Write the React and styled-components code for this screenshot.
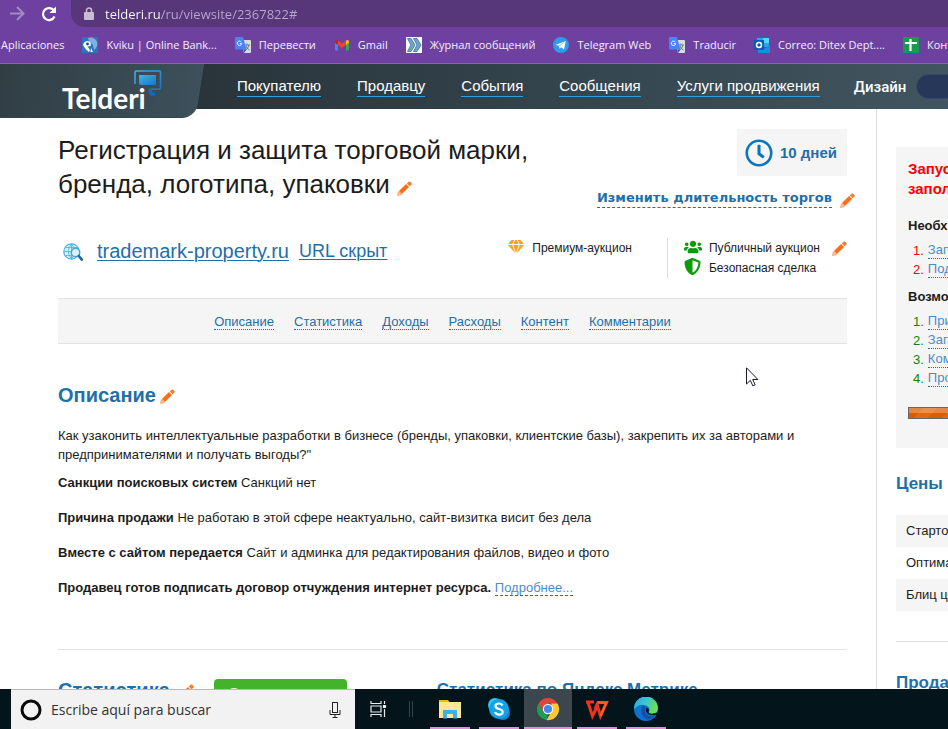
import React from "react";
import styled, { createGlobalStyle, css } from "styled-components";
import { FaUsers, FaShieldAlt, FaRegClock } from "react-icons/fa";

const arial = '"Liberation Sans", Arial, sans-serif';
const ui = '"Open Sans", "Segoe UI", sans-serif';
const blue = "#1f6fa8";

const GlobalStyle = createGlobalStyle`
  *, *::before, *::after { box-sizing: border-box; }
  body { margin: 0; font: 13px/19px ${arial}; color: #1c1c1c; background: #fff; overflow: hidden; }
  h1, h2, h3, p, ul, ol { margin: 0; padding: 0; }
  ul, ol { list-style: none; }
  button, input { font: inherit; margin: 0; padding: 0; border: 0; background: none; color: inherit; outline: 0; }
  a { color: inherit; text-decoration: none; }
  svg { display: block; flex: none; }
`;

const Screen = styled.div`
  display: flex;
  flex-direction: column;
  height: 100vh;
  overflow: hidden;
`;

/* Browser chrome */
const Chrome = styled.header`
  flex: none;
  background: #6e41a1;
  border-bottom: 1px solid #8a63b6;
  color: #f4eefa;
  font-family: ${ui};
  font-size: 11px;
  overflow: hidden;
`;
const AddressRow = styled.div`
  display: flex;
  align-items: center;
  height: 27px;
  padding-left: 1px;
`;
const IconButton = styled.button`
  display: flex;
  width: 32px;
  justify-content: center;
  align-items: center;
  color: ${(p) => (p.$dim ? "#a48ac5" : "#fff")};
`;
const Omnibox = styled.label`
  display: flex;
  flex: 1;
  align-items: center;
  align-self: stretch;
  gap: 11px;
  margin-left: 6px;
  padding-left: 13px;
  background: #573779;
  border-bottom-left-radius: 14px;
`;
const UrlInput = styled.input`
  flex: 1;
  min-width: 0;
  height: 27px;
  font-size: 13px;
  color: transparent;
  background: linear-gradient(90deg, #fff 56px, #bba8d0 56px);
  background-clip: text;
  -webkit-background-clip: text;
`;
const Bookmarks = styled.nav`
  display: flex;
  align-items: center;
  gap: 18px;
  height: 36px;
  padding: 0 0 1px 1px;
`;
const Bookmark = styled.a`
  display: flex;
  flex: none;
  align-items: center;
  gap: 8px;
  white-space: nowrap;
  line-height: 18px;
`;

/* Site header */
const Viewport = styled.div`
  position: relative;
  display: flex;
  flex: 1;
  flex-direction: column;
  min-height: 0;
  overflow: hidden;
`;
const SiteHeader = styled.header`
  position: relative;
  display: flex;
  flex: none;
  height: 45px;
  background: linear-gradient(90deg, #29343a 20%, #354750 65%, #415560);
`;
const LogoTab = styled.a`
  position: relative;
  z-index: 1;
  display: flex;
  flex: none;
  width: 204px;
  height: 54px;
  padding: 5px 0 0 62px;
  color: #fff;
  &::before {
    content: "";
    position: absolute;
    inset: 0 4px 0 -20px;
    z-index: -1;
    background: linear-gradient(90deg, #303d43, #3d505b);
    border-bottom: 1px solid #33434b;
    border-bottom-right-radius: 14px;
    transform: skewX(-9deg);
  }
  svg { position: absolute; left: 134px; top: 6px; }
`;
const LogoText = styled.span`
  padding-top: 11px;
  font: 700 28px/36px Lato, sans-serif;
`;
const SiteNav = styled.nav`
  display: flex;
  flex: none;
  align-items: center;
  gap: 36px;
  padding-left: 33px;
  font-size: 15px;
  line-height: 20px;
  white-space: nowrap;
  color: #fff;
`;
const NavLink = styled.a`
  border-bottom: 1px solid #2f9fd8;
`;
const DesignSwitch = styled.label`
  display: flex;
  align-items: center;
  gap: 10px;
  margin-left: -2px;
  font-family: Roboto, ${arial};
  font-weight: 500;
`;
const Toggle = styled.input`
  appearance: none;
  width: 48px;
  height: 25px;
  background: #26375a;
  border: 1px solid #35476a;
  border-radius: 13px;
`;

/* Page columns */
const Columns = styled.div`
  display: flex;
  flex: 1;
  min-height: 0;
`;
const Main = styled.main`
  flex: 1;
  min-width: 0;
  padding: 20px 29px 0 58px;
`;
const Sidebar = styled.aside`
  flex: 0 0 72px;
  padding: 38px 0 0 19px;
  border-left: 1px solid #ddd;
  white-space: nowrap;
  overflow: hidden;
`;
const TitleRow = styled.div`
  display: flex;
  justify-content: space-between;
  height: 100px;
`;
const Title = styled.h1`
  flex: 0 1 500px;
  padding-top: 4px;
  font-size: 26px;
  font-weight: 400;
  line-height: 34px;
`;
const InlineEdit = styled.button`
  display: inline-block;
  vertical-align: ${(p) => p.$align || "baseline"};
`;
const Duration = styled.div`
  display: flex;
  flex-direction: column;
  align-items: flex-end;
  gap: 12px;
`;
const DaysBadge = styled.div`
  display: flex;
  align-items: center;
  gap: 7px;
  width: 110px;
  height: 47px;
  padding-left: 8px;
  background: #f5f5f5;
  color: ${blue};
  font-size: 15px;
  font-weight: 700;
  svg { color: #0a76bb; }
`;
const DurationEdit = styled.div`
  display: flex;
  gap: 8px;
  margin-right: -8px;
  align-items: flex-end;
`;
const DurationLink = styled.a`
  font: 700 13px/19px "DejaVu Sans", Verdana, sans-serif;
  color: ${blue};
  border-bottom: 1px dashed ${blue};
`;
const MetaRow = styled.div`
  display: flex;
  height: 69px;
  padding-top: 9px;
  align-items: flex-start;
`;
const SiteIcon = styled.span`
  padding: 5px 2px 0 5px;
`;
const SiteLink = styled.a`
  margin-left: ${(p) => (p.$small ? 10 : 12)}px;
  color: ${blue};
  font-size: ${(p) => (p.$small ? 18 : 20)}px;
  line-height: 26px;
  text-decoration: underline;
  text-decoration-thickness: 1px;
  text-underline-offset: 2px;
`;
const Badges = styled.div`
  display: flex;
  flex: none;
  margin-left: auto;
`;
const BadgeList = styled.ul`
  display: flex;
  flex-direction: column;
  height: 40px;
  padding: ${(p) => (p.$divided ? "0 35px 0 0" : "0 0 0 16px")};
  border-right: ${(p) => (p.$divided ? "1px solid #ddd" : 0)};
`;
const Badge = styled.li`
  display: flex;
  align-items: center;
  gap: 7px;
  height: 20px;
  font-size: 12px;
  button { margin-left: 5px; }
`;
const BadgeIcon = styled.span`
  display: flex;
  justify-content: center;
  width: 18px;
  padding-bottom: 3px;
  color: #0a9a0a;
`;
const Anchors = styled.nav`
  display: flex;
  justify-content: center;
  align-items: center;
  gap: 20px;
  height: 46px;
  padding: 2px 20px 0 0;
  background: #f5f5f5;
  border: solid #e2e2e2;
  border-width: 1px 0;
  color: ${blue};
  line-height: 15px;
`;
const dotted = css`border-bottom: 1px dotted ${blue};`;
const AnchorLink = styled.a`${dotted}`;
const Section = styled.section`
  padding: 38px 0 52px;
  border-bottom: 1px solid #e2e2e2;
`;
const Heading = styled.h2`
  display: flex;
  align-items: center;
  gap: ${(p) => p.$gap}px;
  font-size: 20px;
  line-height: 26px;
  color: ${blue};
  button { padding-top: 3px; }
`;
const Intro = styled.p`
  margin: 18px 0 9px;
`;
const Fact = styled.p`
  margin-bottom: 16px;
`;
const MoreLink = styled.a`
  color: #4a8ccb;
  border-bottom: 1px dashed ${blue};
`;
const Stats = styled.section`
  display: flex;
  align-items: flex-start;
  padding-top: 27px;
`;
const GreenButton = styled.button`
  width: 133px;
  height: 30px;
  margin: 2px 90px 0 20px;
  padding-left: 14px;
  border-radius: 4px;
  background: #43b32b;
  color: #fff;
  font-size: 16px;
  font-weight: 700;
  text-align: left;
`;
const SubHeading = styled.h3`
  font-size: 17px;
  line-height: 26px;
  color: ${blue};
`;

/* Sidebar parts */
const Checklist = styled.div`
  height: 301px;
  padding: 12px 0 0 12px;
  background: #f5f5f5;
`;
const Warning = styled.p`
  margin-bottom: 17px;
  color: #f00;
  font-size: 15px;
  font-weight: 700;
  line-height: 20px;
`;
const ListTitle = styled.h3`
  font-size: 13px;
  line-height: 19px;
`;
const Steps = styled.ol`
  margin: 6px 0 8px;
  padding-left: 5px;
  color: ${(p) => p.$color};
`;
const Step = styled.li`
  display: flex;
  gap: 4px;
  height: 19px;
  line-height: 19px;
  a { color: #4a8ccb; ${dotted} line-height: 18px; height: 18px; }
`;
const Progress = styled.div`
  height: 12px;
  margin-top: 19px;
  border: 1px solid #666;
  border-right: 0;
  background:
    linear-gradient(#ffffff44 50%, transparent 50%),
    repeating-linear-gradient(135deg, #dc5c00 0 10px, #e06a10 10px 20px);
`;
const SideHeading = styled.h2`
  font-size: 17px;
  line-height: 24px;
  color: ${blue};
`;
const Prices = styled.table`
  width: 100%;
  margin: 19px 0 30px;
  border-collapse: collapse;
  td { height: 32px; padding: 0 0 2px 10px; }
  tr:nth-child(odd) { background: #f5f5f5; }
`;
const SideBlock = styled.div`
  padding-top: ${(p) => (p.$line ? 29 : 24)}px;
  border-top: ${(p) => (p.$line ? "1px solid #ddd" : 0)};
`;
const Pointer = styled.svg`
  position: absolute;
  left: 746px;
  top: 303px;
`;

/* Taskbar */
const Taskbar = styled.footer`
  display: flex;
  flex: none;
  height: 40px;
  padding-left: 11px;
  background: #03151b;
  font-family: ${ui};
`;
const Search = styled.label`
  display: flex;
  align-items: center;
  flex: none;
  gap: 9px;
  width: 344px;
  padding: 0 14px 0 9px;
  background: #f2f2f2;
  border-top: 1px solid #b9b9b9;
`;
const SearchInput = styled.input`
  flex: 1;
  min-width: 0;
  font-size: 14px;
  &::placeholder { color: #333; opacity: 1; }
`;
const TaskView = styled.button`
  width: 48px;
  padding-left: 15px;
`;
const Grip = styled.span`
  width: 4px;
  height: 16px;
  margin: 12px 13px 0 6px;
  border: solid #36444a;
  border-width: 0 1px;
`;
const Apps = styled.div`
  display: flex;
  gap: 1px;
`;
const TaskButton = styled.button`
  display: flex;
  flex-direction: column;
  align-items: center;
  justify-content: space-between;
  width: 48px;
  padding-top: 8px;
  background: ${(p) => (p.$active ? "#3b474c" : "transparent")};
  &::after {
    content: "";
    width: ${(p) => (p.$active ? 48 : 40)}px;
    height: 2px;
    background: #e48bdc;
  }
`;

/* Drawings */
const Pencil = () => (
  <svg width="15" height="15" viewBox="0 0 15 15">
    <path d="M9.800 2.400 11.600.800q.8-.7 1.600 0l1.200 1.200q.7.8 0 1.600L12.700 5.300z" fill="#ff7a22" />
    <path d="M9 3.100 12 6 4.900 13.100 1.900 10.100z" fill="#ff6d16" />
    <path d="M1.500 10.700 4.300 13.500.600 14.400z" fill="#ffd9c2" stroke="#ff8a3c" strokeWidth=".8" />
  </svg>
);
const Gem = () => (
  <svg width="16" height="14" viewBox="0 0 16 14" fill="#ffa012">
    <path d="M3.500 0h2.700L4.200 4H0zM7.200 0h1.600l1.900 4H5.300zM9.800 0h2.700L16 4h-4.200zM0 5h4.200L7.200 13.200zM5.300 5h5.400L8 13zM11.800 5H16L8.800 13.200z" />
  </svg>
);
const Globe = () => (
  <svg width="20" height="18" viewBox="0 0 20 18" fill="none">
    <circle cx="8.500" cy="8.500" r="7.700" fill="#d6f1fb" stroke="#48b4df" strokeWidth="1.200" />
    <path d="M1 8.500h15M8.500 1v15M2.500 4.500h12M2.500 12.500h12M8.500 1q-6.500 7.500 0 15M8.500 1q6.500 7.500 0 15" stroke="#48b4df" strokeWidth=".8" />
    <circle cx="12.500" cy="9.500" r="4.300" fill="#d9f3fd" stroke="#4aa5d0" strokeWidth="1.400" />
    <path d="m15.800 13 3 3.600" stroke="#17699c" strokeWidth="2.600" strokeLinecap="round" />
  </svg>
);
const LogoMark = () => (
  <svg width="28" height="28" viewBox="0 0 28 28" fill="none">
    <defs>
      <linearGradient id="mark" x1="0" y1="0" x2="1" y2="1">
        <stop stopColor="#3fb2ec" /><stop offset="1" stopColor="#1f74bd" />
      </linearGradient>
    </defs>
    <path d="M1 14V2.500Q1 1 2.500 1h22.500q1.500 0 1.500 1.500v15.500q0 1.200-1.500 1.200h-9" stroke="url(#mark)" strokeWidth="1.600" />
    <path d="M5 5h17v10H7.500Q5 15 5 12.500z" fill="url(#mark)" />
    <path d="M14.500 18.500h3.500v3.500l3.200.8v2.700h-5l-1.700-2z" fill="#1d67ae" />
  </svg>
);
const Kviku = () => (
  <svg width="16" height="16" viewBox="0 0 16 16">
    <path fill="#2b75bd" d="M0 0h16v16H0z" />
    <path fill="#7fb2de" d="M6 1q6-2 9 4 1 5-3 8l-1-5-4-4z" />
    <path fill="#fff" d="M1 8q1-4 5-4 4 1 2.500 5l-3 .5L8 13l-1 2-3-2.500z" />
    <path fill="#fff" d="m9 11 2 4H8.500z" />
    <circle cx="5.500" cy="7" r="1.400" fill="#164f8c" />
  </svg>
);
const Translate = () => (
  <svg width="16" height="16" viewBox="0 0 16 16">
    <path fill="#d9dce0" d="M6 3h9q1 0 1 1v11q0 1-1 1H9z" />
    <path d="M9 8h6M12 6.500V8M14 8q-1 4-4 5.500M11 9q1 3 3.500 4" stroke="#6b7a88" fill="none" />
    <path fill="#4a84f0" d="M1 0h7l3.500 12.500H1q-1 0-1-1V1q0-1 1-1z" />
    <path d="M6.300 5A2.200 2.200 0 1 0 6.700 6.700H4.800" stroke="#fff" fill="none" />
    <path fill="#2c59c4" d="M8.500 12.500h3L9 16z" />
  </svg>
);
const Gmail = () => (
  <svg width="16" height="16" viewBox="0 0 16 16">
    <path fill="#4285f4" d="M1 4.500 4 6v7.500H2q-1 0-1-1z" />
    <path fill="#34a853" d="m12 6 3-1.500v8q0 1-1 1h-2z" />
    <path fill="#ea4335" d="m4 3.500 4 3 4-3V8l-4 3-4-3z" />
    <path fill="#c5221f" d="M1 4.500Q1.200 2 4 3.500V8L1 5.800z" />
    <path fill="#fbbc04" d="M15 4.500Q14.800 2 12 3.500V8l3-2.200z" />
  </svg>
);
const Journal = () => (
  <svg width="16" height="16" viewBox="0 0 16 16">
    <path fill="#f3f8fc" d="M0 0h16v16H0z" />
    <path d="M1.500 1.500H5L9 8l-4 6.500H1.500L5 8zM7.500 1.500H11L15 8l-4 6.500H7.500L11 8z" fill="#6fa3ca" stroke="#3c7299" strokeWidth=".8" />
  </svg>
);
const Telegram = () => (
  <svg width="16" height="16" viewBox="0 0 16 16">
    <circle cx="8" cy="8" r="8" fill="#2f9ce9" />
    <path fill="#fff" d="M2.800 7.800 12.800 4 11 12.500 8 10.300l-1.500 1.500L6 9z" />
    <path stroke="#8cc5f0" d="m6 9 5-3.500" />
  </svg>
);
const Outlook = () => (
  <svg width="16" height="16" viewBox="0 0 16 16">
    <path fill="#28a8ea" d="M3 1h12v9H3z" /><path fill="#50d9ff" d="M9 1h6v5H9z" />
    <path fill="#1490df" d="m4 9 6 3 6-4v8H4z" /><path fill="#0a5cb4" d="M0 3h10v10H0z" />
    <circle cx="5" cy="8" r="2.500" fill="none" stroke="#fff" strokeWidth="1.500" />
  </svg>
);
const Sheets = () => (
  <svg width="16" height="16" viewBox="0 0 16 16">
    <rect width="16" height="16" rx="1" fill="#149c55" />
    <path d="M7.500 2v12M2 6h12" stroke="#fff" strokeWidth="2.200" />
  </svg>
);
const Explorer = () => (
  <svg width="22" height="24" viewBox="0 0 22 24">
    <path fill="#f2b816" d="M0 3h9l1.500 2H22v4H0z" /><path fill="#ffe594" d="M0 5h22v16H0z" />
    <path fill="#3bb1e8" d="M4 21.500V13h14v8.500h-4V17H8v4.500z" />
  </svg>
);
const Skype = () => (
  <svg width="24" height="24" viewBox="0 0 24 24">
    <circle cx="8" cy="8" r="7" fill="#35c5f4" /><circle cx="16" cy="16" r="7" fill="#0d83d2" />
    <circle cx="12" cy="12" r="10" fill="#12a3e7" />
    <path d="M15.500 8.500Q14.500 6.500 12 6.500q-3.500 0-3.500 2.600 0 2.200 3.500 2.900 3.700.8 3.700 3 0 2.600-3.700 2.600-3 0-4-2.400" fill="none" stroke="#fff" strokeWidth="2.200" />
  </svg>
);
const ChromeLogo = () => (
  <svg width="24" height="24" viewBox="0 0 24 24">
    <path fill="#e0443a" d="M2.500 6.500A11 11 0 0 1 21.500 6.500H12L7 14.500z" />
    <path fill="#1f9d55" d="M2.500 6.500 7.300 14.700 12 17l-1.500 6A11 11 0 0 1 2.500 6.500z" />
    <path fill="#fcc934" d="M21.500 6.500A11 11 0 0 1 10.500 23L17 12l-2-5.500z" />
    <circle cx="12" cy="12" r="5.200" fill="#fff" /><circle cx="12" cy="12" r="4.100" fill="#4688f1" />
  </svg>
);
const Wps = () => (
  <svg width="24" height="24" viewBox="0 0 24 24">
    <path d="M1 5h8M3 5.500 7.500 19l5-10 3 10L21.500 5.500H13L10 12" fill="none" stroke="#f0321c" strokeWidth="3" />
    <path d="m15.500 19 6-13.500H13" fill="none" stroke="#ff5b22" strokeWidth="2.400" />
  </svg>
);
const Edge = () => (
  <svg width="24" height="24" viewBox="0 0 24 24">
    <defs>
      <linearGradient id="edge" x1="0" y1="0" x2="1" y2=".4">
        <stop stopColor="#2c9fe0" /><stop offset=".5" stopColor="#36c6d6" /><stop offset="1" stopColor="#69df55" />
      </linearGradient>
    </defs>
    <circle cx="12" cy="12" r="12" fill="#0f72cd" />
    <path fill="url(#edge)" d="M0 12A12 12 0 0 1 24 11q0 5.500-6 5.500-3 0-3.500-1.500Q17 12 14 9.500 7 5 0 12z" />
    <path fill="#1152a5" d="M8 9.500q-3 9 5 13 6 0 9-5.500-7 4-10 0-2-3 0-6-1.500-2.500-4-1.500z" />
    <path fill="#03151b" d="M12.500 10.500q-2 5 2.500 7 4 1.200 9 0l-.5-2q-8 3-9-.5Q16 12 12.500 10.500z" />
  </svg>
);

const bookmarks = [
  ["Aplicaciones", null],
  ["Kviku | Online Bank...", Kviku],
  ["Перевести", Translate],
  ["Gmail", Gmail],
  ["Журнал сообщений", Journal],
  ["Telegram Web", Telegram],
  ["Traducir", Translate],
  ["Correo: Ditex Dept....", Outlook],
  ["Конт", Sheets],
];
const siteNav = ["Покупателю", "Продавцу", "События", "Сообщения", "Услуги продвижения"];
const anchors = ["Описание", "Статистика", "Доходы", "Расходы", "Контент", "Комментарии"];
const facts = [
  ["Санкции поисковых систем", "Санкций нет"],
  ["Причина продажи", "Не работаю в этой сфере неактуально, сайт-визитка висит без дела"],
  ["Вместе с сайтом передается", "Сайт и админка для редактирования файлов, видео и фото"],
];
const apps = [
  ["Explorador", Explorer],
  ["Skype", Skype],
  ["Chrome", ChromeLogo, true],
  ["WPS Office", Wps],
  ["Edge", Edge],
];

const EditButton = ({ align }) => (
  <InlineEdit type="button" aria-label="Изменить" $align={align}>
    <Pencil />
  </InlineEdit>
);

const StepList = ({ items, color }) => (
  <Steps $color={color}>
    {items.map((t, i) => (
      <Step key={t}>
        {i + 1}. <a href="#step">{t}</a>
      </Step>
    ))}
  </Steps>
);

export default function App() {
  return (
    <Screen>
      <GlobalStyle />
      <Chrome>
        <AddressRow>
          <IconButton type="button" aria-label="Adelante" $dim>
            <svg width="16" height="16" viewBox="0 0 16 16" fill="none" stroke="currentColor" strokeWidth="2">
              <path d="M1 7.500h13M8 1l6.500 6.500L8 14" />
            </svg>
          </IconButton>
          <IconButton type="button" aria-label="Recargar">
            <svg width="16" height="16" viewBox="0 0 16 16" fill="none" stroke="currentColor" strokeWidth="2.200">
              <path d="M13.500 10.500a6 6 0 1 1-.3-5.500" />
              <path d="M15 .5v6.500H8.500z" fill="currentColor" stroke="none" />
            </svg>
          </IconButton>
          <Omnibox>
            <svg width="10" height="14" viewBox="0 0 10 14">
              <path d="M2.500 6V3.500a2.500 2.500 0 0 1 5 0V6" fill="none" stroke="#c9bdd6" strokeWidth="1.500" />
              <rect y="5" width="10" height="8" rx="1" fill="#c9bdd6" />
            </svg>
            <UrlInput aria-label="URL" defaultValue="telderi.ru/ru/viewsite/2367822#" />
          </Omnibox>
        </AddressRow>
        <Bookmarks>
          {bookmarks.map(([name, Icon]) => (
            <Bookmark href="#bookmark" key={name}>
              {Icon && <Icon />}
              {name}
            </Bookmark>
          ))}
        </Bookmarks>
      </Chrome>

      <Viewport>
        <SiteHeader>
          <LogoTab href="#home">
            <LogoText>Telderi</LogoText>
            <LogoMark />
          </LogoTab>
          <SiteNav>
            {siteNav.map((t) => (
              <NavLink href="#nav" key={t}>{t}</NavLink>
            ))}
            <DesignSwitch>
              Дизайн
              <Toggle type="checkbox" />
            </DesignSwitch>
          </SiteNav>
        </SiteHeader>

        <Columns>
          <Main>
            <TitleRow>
              <Title>
                Регистрация и защита торговой марки, бренда, логотипа, упаковки <EditButton align="-3px" />
              </Title>
              <Duration>
                <DaysBadge>
                  <FaRegClock size={28} />
                  10 дней
                </DaysBadge>
                <DurationEdit>
                  <DurationLink href="#duration">Изменить длительность торгов</DurationLink>
                  <EditButton />
                </DurationEdit>
              </Duration>
            </TitleRow>

            <MetaRow>
              <SiteIcon><Globe /></SiteIcon>
              <SiteLink href="#site">trademark-property.ru</SiteLink>
              <SiteLink href="#hidden" $small>URL скрыт</SiteLink>
              <Badges>
                <BadgeList $divided>
                  <Badge><BadgeIcon><Gem /></BadgeIcon>Премиум-аукцион</Badge>
                </BadgeList>
                <BadgeList>
                  <Badge><BadgeIcon><FaUsers size={18} /></BadgeIcon>Публичный аукцион <EditButton /></Badge>
                  <Badge><BadgeIcon><FaShieldAlt size={17} /></BadgeIcon>Безопасная сделка</Badge>
                </BadgeList>
              </Badges>
            </MetaRow>

            <Anchors>
              {anchors.map((t) => (
                <AnchorLink href="#section" key={t}>{t}</AnchorLink>
              ))}
            </Anchors>

            <Section>
              <Heading $gap={4}>Описание <EditButton /></Heading>
              <Intro>
                Как узаконить интеллектуальные разработки в бизнесе (бренды, упаковки, клиентские базы), закрепить их за
                авторами и предпринимателями и получать выгоды?"
              </Intro>
              {facts.map(([k, v]) => (
                <Fact key={k}><b>{k}</b> {v}</Fact>
              ))}
              <p>
                <b>Продавец готов подписать договор отчуждения интернет ресурса.</b>{" "}
                <MoreLink href="#more">Подробнее...</MoreLink>
              </p>
            </Section>

            <Stats>
              <Heading $gap={9}>Статистика <EditButton /></Heading>
              <GreenButton type="button">Смотреть</GreenButton>
              <SubHeading>Статистика по Яндекс Метрике</SubHeading>
            </Stats>
          </Main>

          <Sidebar>
            <Checklist>
              <Warning>Запус<br />запол</Warning>
              <ListTitle>Необх</ListTitle>
              <StepList color="#f00" items={["Зап", "Под"]} />
              <ListTitle>Возмо</ListTitle>
              <StepList color="#0a850a" items={["При", "Зап", "Ком", "Про"]} />
              <Progress />
            </Checklist>
            <SideBlock>
              <SideHeading>Цены</SideHeading>
              <Prices>
                <tbody>
                  <tr><td>Старто</td></tr>
                  <tr><td>Оптима</td></tr>
                  <tr><td>Блиц ц</td></tr>
                </tbody>
              </Prices>
            </SideBlock>
            <SideBlock $line>
              <SideHeading>Прода</SideHeading>
            </SideBlock>
          </Sidebar>
        </Columns>
        <Pointer width="13" height="20" viewBox="0 0 13 20">
          <path d="M.500.800V17l3.800-3.600 2.600 5.500 2.300-1.100-2.500-5.300h5.200z" fill="#fff" stroke="#1a1a2a" />
        </Pointer>
      </Viewport>

      <Taskbar>
        <Search>
          <svg width="22" height="22" viewBox="0 0 22 22">
            <circle cx="11" cy="11" r="9" fill="none" stroke="#0a0a0a" strokeWidth="3" />
          </svg>
          <SearchInput aria-label="Buscar" placeholder="Escribe aquí para buscar" />
          <svg width="12" height="18" viewBox="0 0 12 18" fill="none" stroke="#222">
            <rect x="3.500" y="1.500" width="5" height="10" /><path d="M1 9v4.500h10V9M6 13.500V16.500M3.500 16.500h5" />
          </svg>
        </Search>
        <TaskView type="button" aria-label="Vista de tareas">
          <svg width="18" height="16" viewBox="0 0 18 16" fill="none" stroke="#e8eaeb" strokeWidth="1.200">
            <path d="M1 0v2.500h10V0M1 16v-2.500h10V16M1 5h10v6H1zM14.500 0v3M14.500 8v8" /><path d="M13.500 4.500h2v2h-2z" fill="#fff" />
          </svg>
        </TaskView>
        <Grip />
        <Apps>
          {apps.map(([name, Icon, active]) => (
            <TaskButton type="button" key={name} aria-label={name} $active={active}><Icon /></TaskButton>
          ))}
        </Apps>
      </Taskbar>
    </Screen>
  );
}
